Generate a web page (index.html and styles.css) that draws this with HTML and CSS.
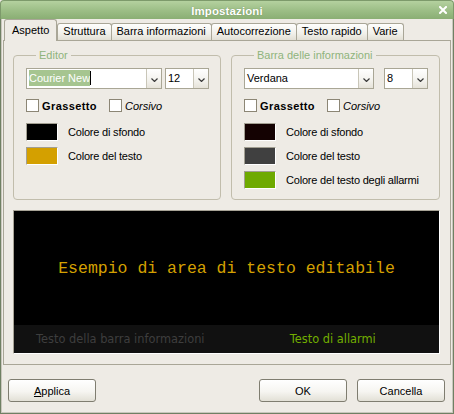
FILE: index.html
```html
<!DOCTYPE html>
<html lang="it">
<head>
<meta charset="utf-8">
<title>Impostazioni</title>
<link rel="stylesheet" href="styles.css">
</head>
<body>
<div class="window">
  <div class="titlebar">
    <span></span>
    <span class="title">Impostazioni</span>
    <svg class="close" width="8" height="8" viewBox="0 0 8 8"><path d="M1 1L7 7M7 1L1 7" stroke="#fff" stroke-width="2" stroke-linecap="square"/></svg>
  </div>
  <div class="frame">
    <div class="tabs">
      <div class="tab active">Aspetto</div>
      <div class="tab">Struttura</div>
      <div class="tab">Barra informazioni</div>
      <div class="tab">Autocorrezione</div>
      <div class="tab">Testo rapido</div>
      <div class="tab">Varie</div>
    </div>
    <div class="panel">
      <div class="groups">
        <fieldset class="group">
          <legend>Editor</legend>
          <div class="combos">
            <div class="combo font-left">
              <div class="field"><span class="sel">Courier New</span><span class="caret"></span></div>
              <div class="drop"><svg width="7" height="4" viewBox="0 0 7 4"><polyline points="0.5,0.5 3.5,3.5 6.5,0.5" fill="none" stroke="#3a3a3a" stroke-width="1.2"/></svg></div>
            </div>
            <div class="combo size">
              <div class="field">12</div>
              <div class="drop"><svg width="7" height="4" viewBox="0 0 7 4"><polyline points="0.5,0.5 3.5,3.5 6.5,0.5" fill="none" stroke="#3a3a3a" stroke-width="1.2"/></svg></div>
            </div>
          </div>
          <div class="checks">
            <label class="check"><span class="box"></span><b>Grassetto</b></label>
            <label class="check"><span class="box"></span><i>Corsivo</i></label>
          </div>
          <div class="swatches">
            <div class="swrow"><span class="swatch sw-black"></span>Colore di sfondo</div>
            <div class="swrow"><span class="swatch sw-gold"></span>Colore del testo</div>
          </div>
        </fieldset>
        <fieldset class="group">
          <legend>Barra delle informazioni</legend>
          <div class="combos">
            <div class="combo font-right">
              <div class="field">Verdana</div>
              <div class="drop"><svg width="7" height="4" viewBox="0 0 7 4"><polyline points="0.5,0.5 3.5,3.5 6.5,0.5" fill="none" stroke="#3a3a3a" stroke-width="1.2"/></svg></div>
            </div>
            <div class="combo size">
              <div class="field">8</div>
              <div class="drop"><svg width="7" height="4" viewBox="0 0 7 4"><polyline points="0.5,0.5 3.5,3.5 6.5,0.5" fill="none" stroke="#3a3a3a" stroke-width="1.2"/></svg></div>
            </div>
          </div>
          <div class="checks">
            <label class="check"><span class="box"></span><b>Grassetto</b></label>
            <label class="check"><span class="box"></span><i>Corsivo</i></label>
          </div>
          <div class="swatches">
            <div class="swrow"><span class="swatch sw-dark"></span>Colore di sfondo</div>
            <div class="swrow"><span class="swatch sw-grey"></span>Colore del testo</div>
            <div class="swrow"><span class="swatch sw-green"></span>Colore del testo degli allarmi</div>
          </div>
        </fieldset>
      </div>
      <div class="preview">
        <div class="preview-main">Esempio di area di testo editabile</div>
        <div class="preview-bar">
          <span class="bar-text">Testo della barra informazioni</span>
          <span class="alarm">Testo di allarmi</span>
        </div>
      </div>
    </div>
    <div class="buttons">
      <button class="btn"><u>A</u>pplica</button>
      <span class="spacer"></span>
      <button class="btn">OK</button>
      <button class="btn">Cancella</button>
    </div>
  </div>
</div>
</body>
</html>
```
FILE: styles.css
```css
html, body {
  margin: 0;
  padding: 0;
}
body {
  width: 454px;
  height: 414px;
  overflow: hidden;
  font-family: "Liberation Sans", Arial, sans-serif;
  font-size: 11px;
  color: #000;
  background: #eeebe5;
}
.window {
  width: 454px;
  height: 414px;
  display: flex;
  flex-direction: column;
}
.titlebar {
  box-sizing: border-box;
  height: 19px;
  flex: none;
  display: grid;
  grid-template-columns: 1fr auto 1fr;
  align-items: center;
  padding: 1px 6px 0 6px;
  background: linear-gradient(#b4d19f, #9bbd85 55%, #8aae74);
  border: 1px solid #7d9a6b;
  border-bottom: none;
  border-radius: 4px 4px 0 0;
}
.title {
  color: #fff;
  font-weight: bold;
  font-size: 11.5px;
  letter-spacing: 0.1px;
  text-shadow: 0 0 1px rgba(60, 90, 40, 0.6);
}
.close {
  justify-self: end;
  margin-top: -1px;
}
.frame {
  flex: 1;
  display: flex;
  flex-direction: column;
  padding: 0 2px;
  border: 1px solid #6f8063;
  border-top: none;
  box-shadow: inset 1px 0 0 #c9c6bc, inset -1px 0 0 #c9c6bc, inset 0 -1px 0 #c9c6bc;
}
.tabs {
  display: flex;
  align-items: flex-end;
  height: 21px;
  flex: none;
  padding-left: 1px;
}
.tab {
  box-sizing: border-box;
  height: 17px;
  line-height: 15px;
  padding: 0 5px;
  border: 1px solid #a9a697;
  border-bottom: none;
  border-radius: 3px 3px 0 0;
  background: linear-gradient(#fefefd, #f1f0ea 60%, #e2dfd4);
  white-space: nowrap;
}
.tab + .tab {
  margin-left: -1px;
}
.tab.active {
  height: 22px;
  line-height: 20px;
  padding: 0 7px;
  margin-bottom: -1px;
  background: #eeebe5;
  position: relative;
  z-index: 1;
}
.tab.active + .tab {
  margin-left: 0;
}
.panel {
  box-sizing: border-box;
  height: 325px;
  flex: none;
  border: 1px solid #a9a697;
  background: #eeebe5;
  padding: 8px 10px 0 9px;
  display: flex;
  flex-direction: column;
}
.groups {
  display: grid;
  grid-template-columns: 208px 209px;
  column-gap: 10px;
}
.group {
  margin: 0;
  min-width: 0;
  padding: 6px 11px 10px 12px;
  border: 1px solid #c1bdac;
  border-radius: 4px;
}
.group legend {
  padding: 0 3px;
  margin-left: 10px;
  line-height: 13px;
  color: #8fb47c;
}
.combos {
  display: flex;
  justify-content: space-between;
}
.combo {
  box-sizing: border-box;
  height: 21px;
  display: flex;
  border: 1px solid #a9a695;
  background: #fff;
}
.combo.font-left { width: 136px; }
.combo.font-right { width: 130px; }
.combo.size { width: 44px; }
.field {
  flex: 1;
  padding-left: 2px;
  line-height: 19px;
  white-space: nowrap;
  overflow: hidden;
}
.sel {
  background: #a6c590;
  color: #fff;
  padding: 2px 0;
}
.caret {
  display: inline-block;
  width: 1px;
  height: 14px;
  background: #000;
  vertical-align: -3px;
}
.drop {
  width: 15px;
  flex: none;
  border-left: 1px solid #c9c6b8;
  background: linear-gradient(#ffffff, #f3f2ed 60%, #e6e3da);
  display: flex;
  align-items: center;
  justify-content: center;
  padding-top: 2px;
  box-sizing: border-box;
}
.checks {
  display: flex;
  gap: 12px;
  margin-top: 10px;
  height: 13px;
  align-items: center;
}
.check {
  display: flex;
  align-items: center;
  gap: 3px;
}
.check b {
  letter-spacing: 0.4px;
}
.box {
  box-sizing: border-box;
  width: 13px;
  height: 13px;
  border: 1px solid #8c8675;
  background: #fff;
}
.swatches {
  display: flex;
  flex-direction: column;
  gap: 6px;
  margin-top: 11px;
}
.swrow {
  display: flex;
  align-items: center;
  gap: 10px;
  height: 18px;
  white-space: nowrap;
  letter-spacing: -0.2px;
}
.swatch {
  box-sizing: border-box;
  width: 32px;
  height: 18px;
  flex: none;
  border: 1px solid;
  border-color: #a29f92 #fff #fff #a29f92;
}
.sw-black { background: #000; }
.sw-gold { background: #d4a000; }
.sw-dark { background: #140202; }
.sw-grey { background: #404040; }
.sw-green { background: #6eaa00; }
.preview {
  margin-top: 10px;
  border: 1px solid;
  border-color: #a7a396 #fff #fff #a7a396;
  display: flex;
  flex-direction: column;
}
.preview-main {
  height: 114px;
  background: #000;
  display: flex;
  align-items: center;
  justify-content: center;
  font-family: "Liberation Mono", "Courier New", monospace;
  font-size: 16.5px;
  color: #d4a000;
  white-space: nowrap;
}
.preview-bar {
  height: 28px;
  background: #111;
  display: grid;
  grid-template-columns: 1fr 1fr;
  align-items: center;
  text-align: center;
  font-family: "DejaVu Sans", Verdana, sans-serif;
  font-size: 11.4px;
  white-space: nowrap;
}
.bar-text { color: #3e3e3e; }
.alarm { color: #72ae00; }
.buttons {
  display: flex;
  gap: 10px;
  margin: 14px 6px 0 5px;
}
.spacer { flex: 1; }
.btn {
  box-sizing: border-box;
  width: 88px;
  height: 23px;
  padding: 0;
  border: 1px solid #7f7d70;
  border-radius: 3px;
  background: linear-gradient(#ffffff, #f6f5f1 55%, #e2e0d6);
  font-family: "Liberation Sans", Arial, sans-serif;
  font-size: 11px;
  color: #000;
}
```
